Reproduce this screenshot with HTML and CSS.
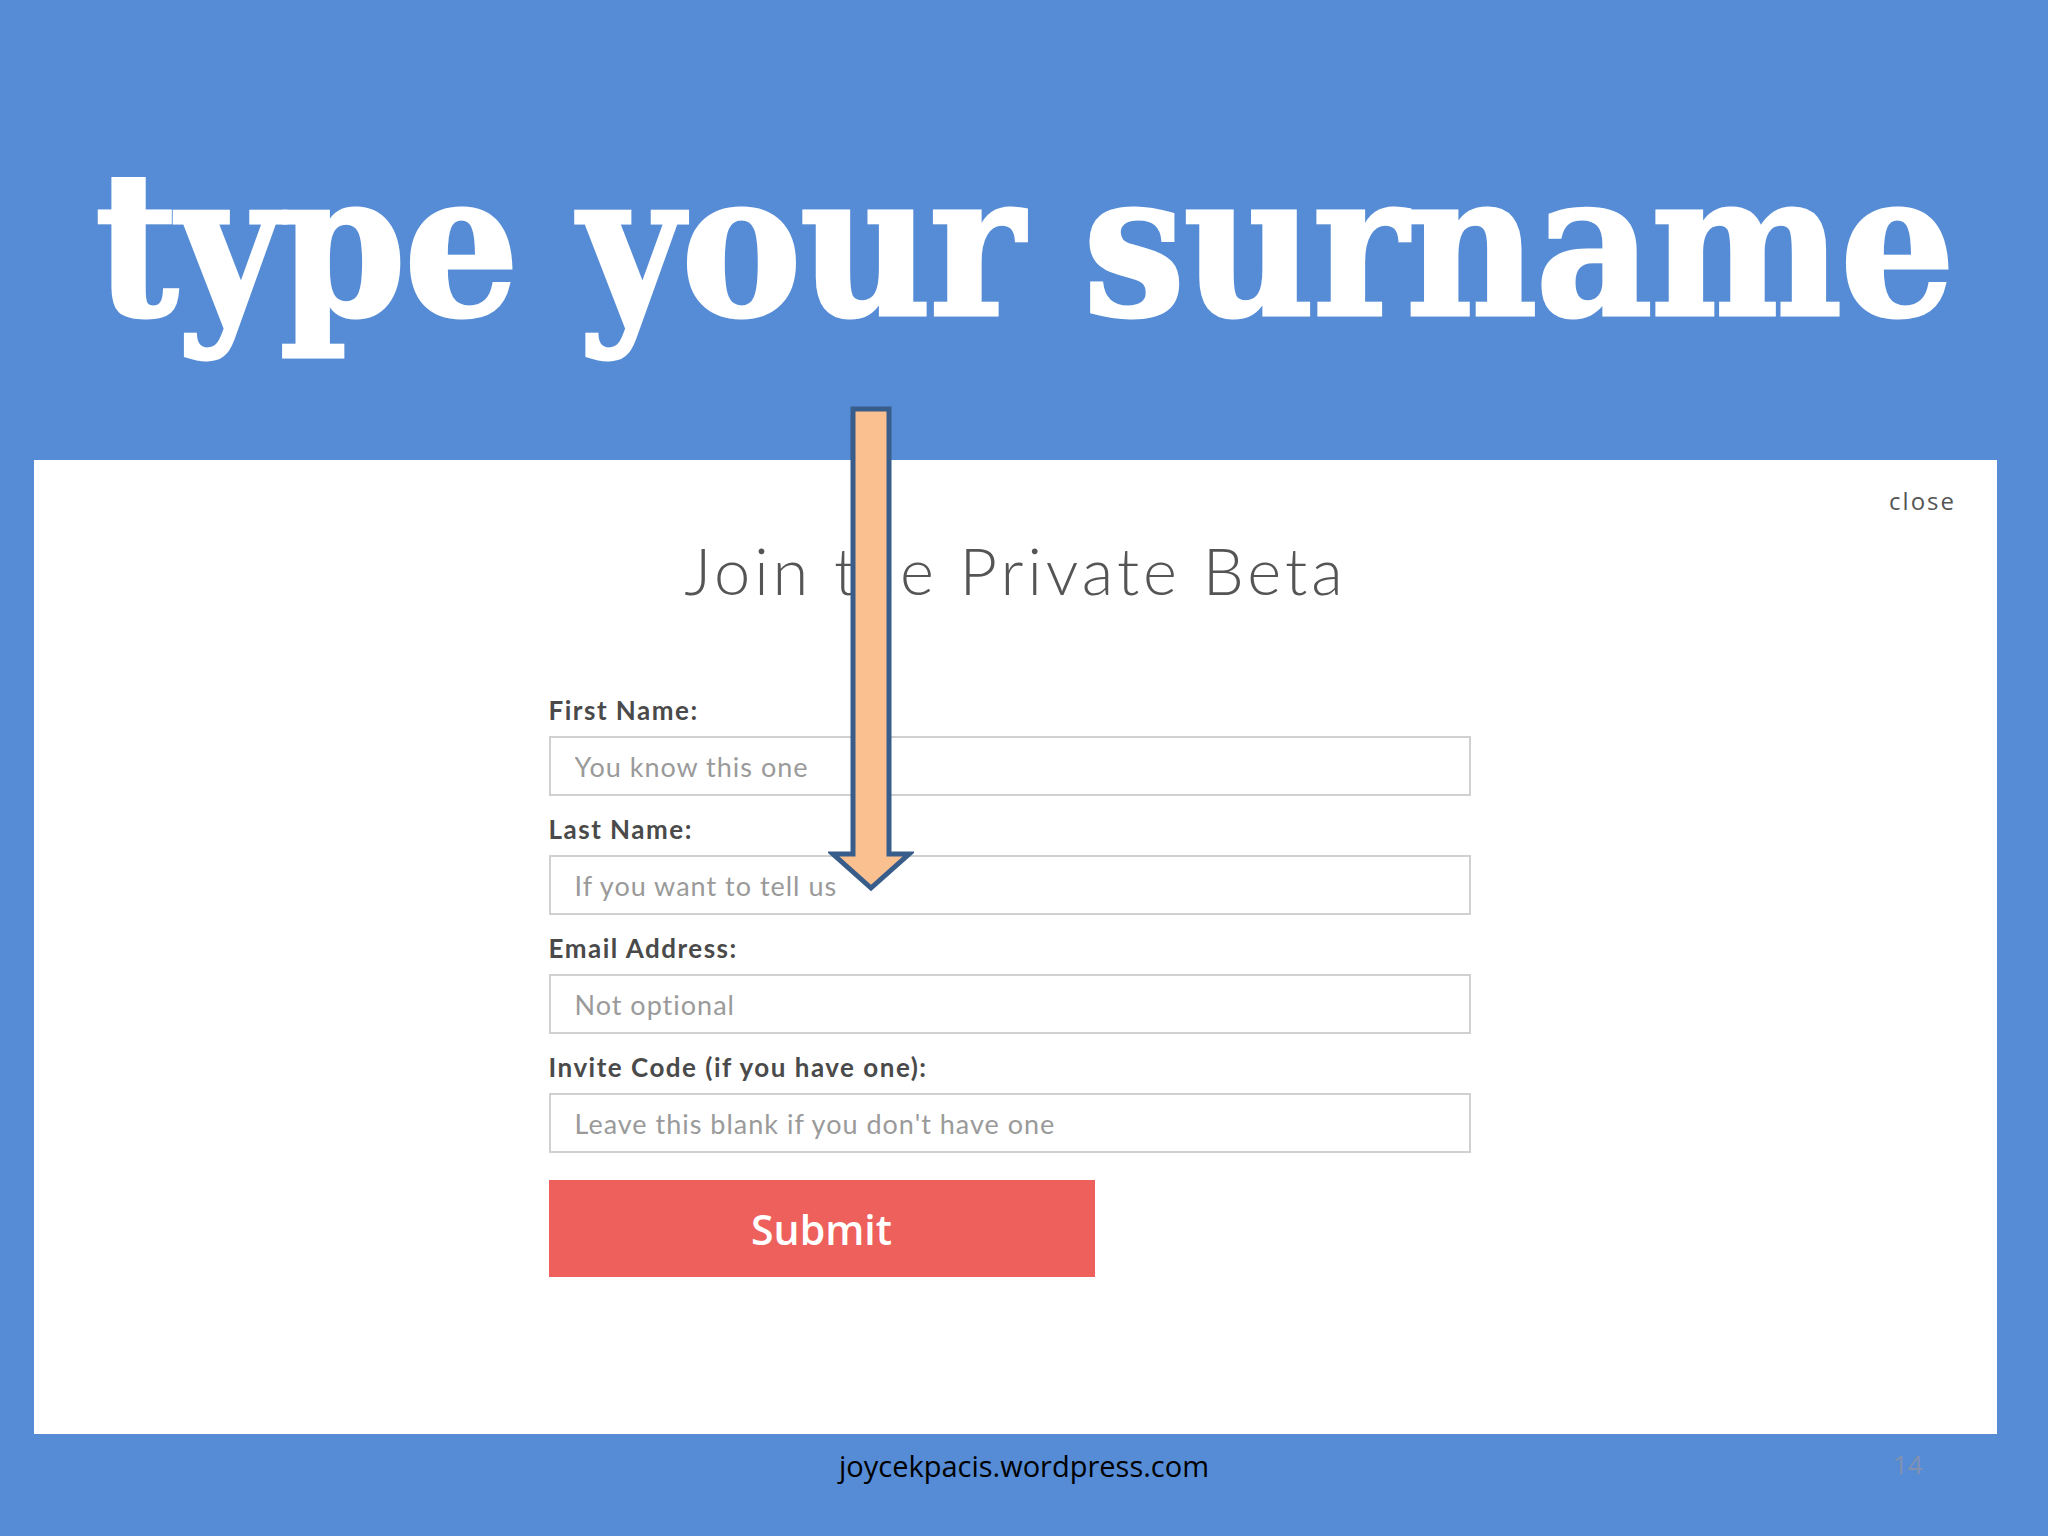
FILE: index.html
```html
<!DOCTYPE html>
<html lang="en">
<head>
    <meta charset="UTF-8">
    <title>type your surname</title>
    <link rel="stylesheet" href="styles.css">
</head>
<body>
    <header class="slideHeader">
        <h1 class="slideTitle">type your surname</h1>
    </header>

    <section class="modal">
        <a class="closeLink" href="#">close</a>
        <h2 class="modalTitle">Join the Private Beta</h2>
        <form class="betaForm">
            <label for="firstName">First Name:</label>
            <input type="text" id="firstName" placeholder="You know this one">

            <label for="lastName">Last Name:</label>
            <input type="text" id="lastName" placeholder="If you want to tell us">

            <label for="email">Email Address:</label>
            <input type="text" id="email" placeholder="Not optional">

            <label for="invite">Invite Code (if you have one):</label>
            <input type="text" id="invite" placeholder="Leave this blank if you don't have one">

            <button class="submitBtn" type="submit">Submit</button>
        </form>
    </section>

    <footer class="slideFooter">
        <span class="footerText">joycekpacis.wordpress.com</span>
        <span class="pageNumber">14</span>
    </footer>

    <!-- callout arrow drawn over the slide -->
    <svg class="arrow" width="86" height="490" viewBox="0 0 86 490">
        <polygon points="25,5 61,5 61,450 81,450 43,484 5,450 25,450" fill="#fac090" stroke="#385d8a" stroke-width="5" stroke-linejoin="miter"/>
    </svg>
</body>
</html>
```
FILE: styles.css
```css
body{
    margin: 0;
    width: 2048px;
    height: 1536px;
    background-color: #558cd5;
    position: relative;
    overflow: hidden;
    font-family: Lato, "Open Sans", sans-serif;
}

.slideHeader{
    height: 460px;
    box-sizing: border-box;
    padding-top: 144px;
}

.slideTitle{
    margin: 0;
    text-align: center;
    color: #fff;
    font-family: "DejaVu Serif Condensed", "DejaVu Serif", serif;
    font-weight: bold;
    font-size: 201px;
    line-height: 1;
    letter-spacing: -2px;
    -webkit-text-stroke: 3px #fff;
}

.modal{
    background-color: #fff;
    margin: 0 51px 0 34px;
    height: 974px;
    box-sizing: border-box;
    padding: 24px 40px 0;
    display: flex;
    flex-direction: column;
}

.closeLink{
    align-self: flex-end;
    color: #555;
    font-family: "Open Sans", sans-serif;
    font-size: 24px;
    letter-spacing: 2px;
    text-decoration: none;
    margin-right: 1px;
}

.modalTitle{
    margin: 14px 0 0;
    text-align: center;
    font-weight: 300;
    font-size: 65px;
    color: #555;
    letter-spacing: 4px;
}

.betaForm{
    width: 922px;
    margin: 85px auto 0;
    position: relative;
    left: -6px;
    display: flex;
    flex-direction: column;
}

.betaForm label{
    font-weight: bold;
    font-size: 26px;
    letter-spacing: 1.5px;
    color: #4a4a4a;
    line-height: 32px;
    margin-bottom: 10px;
}

.betaForm input{
    height: 60px;
    box-sizing: border-box;
    border: 2px solid #d0d0d0;
    padding: 0 24px;
    font-family: Lato, sans-serif;
    font-size: 27px;
    letter-spacing: 1px;
    margin-bottom: 17px;
}

.betaForm input::placeholder{
    color: #9a9a9a;
}

.submitBtn{
    width: 546px;
    height: 97px;
    margin-top: 10px;
    border: none;
    background-color: #ee605c;
    color: #fff;
    font-family: "Open Sans", sans-serif;
    font-weight: 600;
    font-size: 41px;
    cursor: pointer;
}

.slideFooter{
    height: 102px;
    display: flex;
    justify-content: center;
    align-items: center;
    position: relative;
}

.footerText{
    font-family: "Open Sans", sans-serif;
    font-size: 29px;
    color: #000;
    margin-bottom: 40px;
}

.pageNumber{
    position: absolute;
    left: 1893px;
    top: 12px;
    font-family: "Open Sans", sans-serif;
    font-size: 26px;
    color: #8391b0;
}

.arrow{
    position: absolute;
    left: 828px;
    top: 404px;
}
```
